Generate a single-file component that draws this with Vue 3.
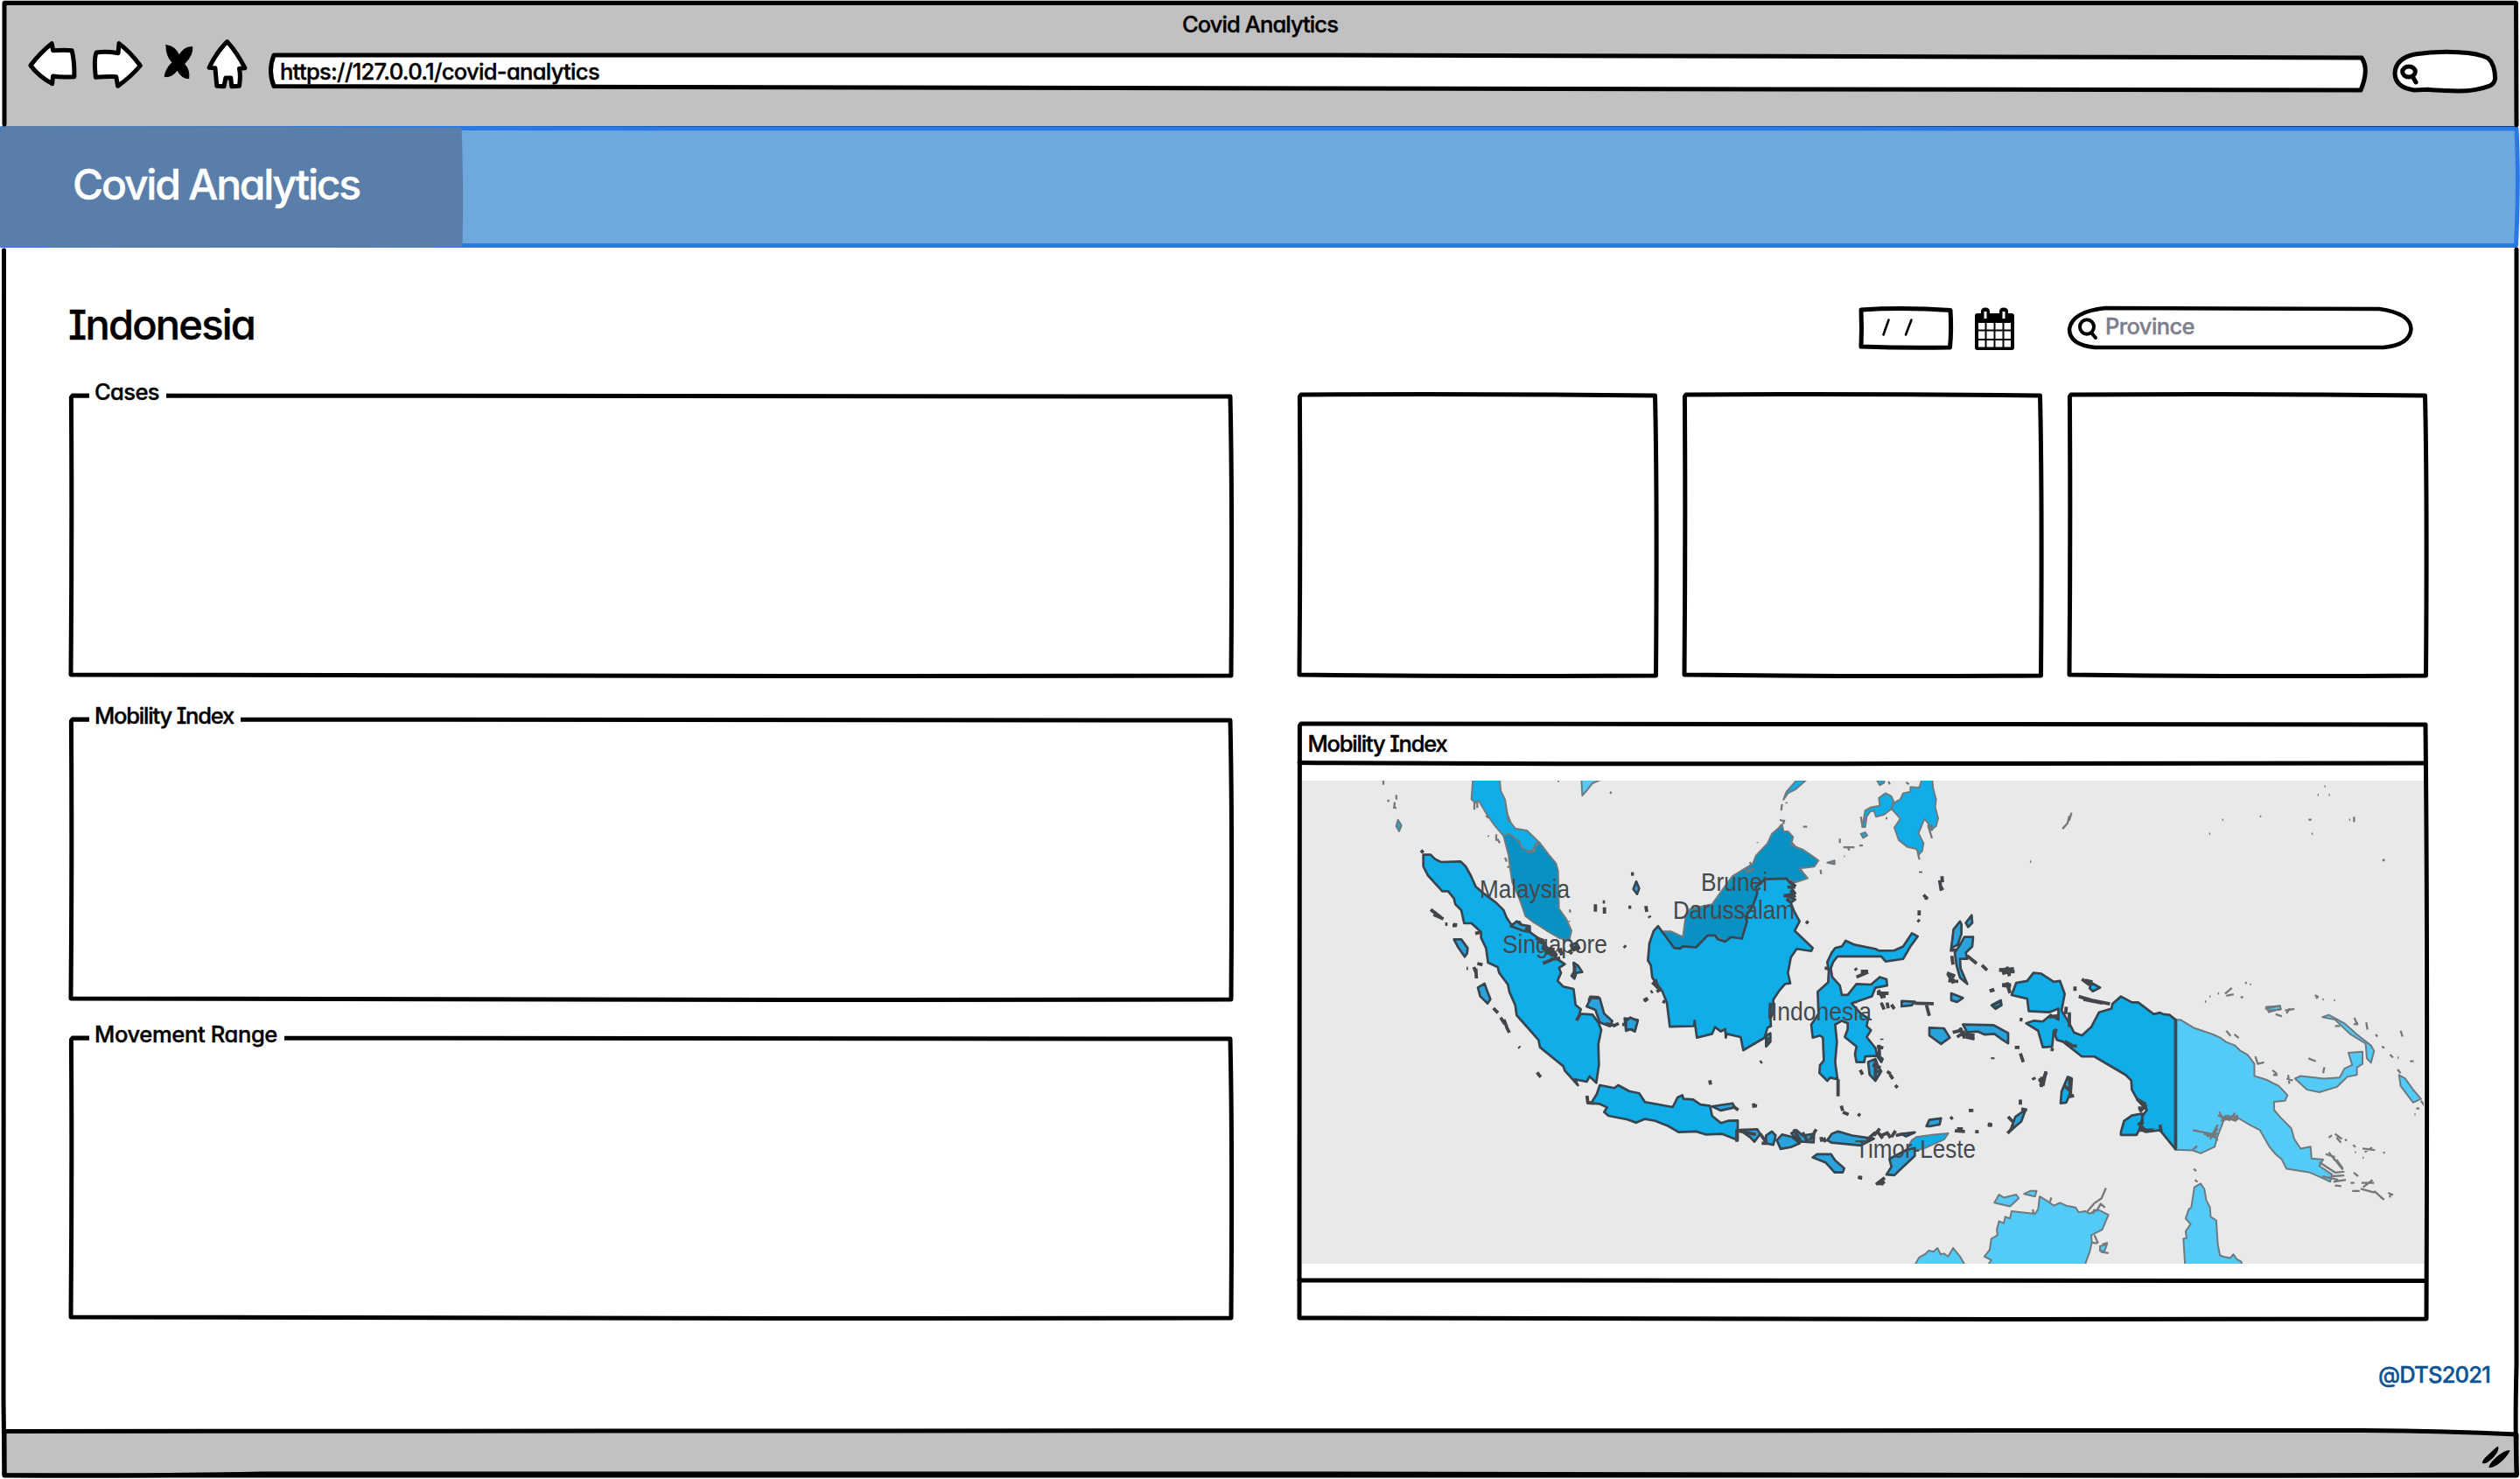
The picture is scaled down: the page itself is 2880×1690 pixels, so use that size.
<script setup>
// Stretches or tightens letter spacing so that a label takes a fixed width.
const vFit = {
  mounted(el, { value }) {
    const n = el.textContent.length
    const w = el.getBoundingClientRect().width
    el.style.letterSpacing = `${(value - w) / n}px`
  },
}

// Slightly uneven rectangle, as drawn by hand.
const sketch = (w, h) =>
  `M2,0 Q${w / 2},-1.2 ${w - 1},1 Q${w + 1.6},${h * 0.36} ${w},${h} ` +
  `Q${w * 0.5},${h + 1.6} 0,${h - 1} Q1.4,${h * 0.5} 0.4,2 Z`

const charts = [
  { name: 'Cases', width: 74, cls: 'cases' },
  { name: 'Mobility Index', width: 159, cls: 'mobility' },
  { name: 'Movement Range', width: 209, cls: 'movement' },
]

const west = {
  thailand: 'M640,270 L635,340 648,352 660,345 690,395 715,430 745,465 780,470 800,500 815,520 845,515 858,490 868,488 825,447 785,440 770,420 758,390 750,340 735,310 732,270Z',
  malaysia: 'M745,465 L765,458 785,475 800,485 805,505 820,512 830,522 850,520 855,500 868,488 900,530 925,560 932,585 935,715 960,750 978,790 970,825 935,815 900,795 870,775 845,760 820,740 808,705 795,670 775,625 768,580 762,530Z',
  sumatra: 'M470,530 L495,530 510,545 530,555 598,553 615,570 632,600 650,640 680,665 720,695 745,720 755,745 772,770 800,760 815,785 835,795 870,820 905,860 925,885 955,905 935,918 942,935 930,962 950,982 985,990 992,1045 1010,1060 1005,1075 1050,1078 1070,1105 1080,1130 1070,1180 1072,1250 1063,1312 1040,1290 1030,1308 990,1300 1000,1320 955,1270 950,1255 870,1190 865,1165 790,1080 785,1045 765,1000 760,975 730,935 725,915 692,900 685,850 668,815 668,795 635,765 610,765 600,720 580,700 575,680 555,655 535,655 485,600 470,570Z',
  isles: 'M575,820 L600,820 622,850 620,868 612,880 588,845Z M657,985 L680,972 690,1000 700,1025 690,1040 665,1015Z M1030,1050 L1045,1020 1075,1022 1090,1075 1118,1100 1110,1118 1075,1105 1060,1062Z M1165,1100 L1180,1088 1205,1100 1195,1135 1182,1128 1165,1130Z M1200,622 L1210,645 1203,665 1190,648Z M985,900 L1000,910 1015,932 995,935 988,955 978,945 988,930Z M770,775 L790,758 805,770 835,775 835,795 810,790Z M975,840 L995,832 1005,850 985,858Z',
  specks: 'M462,515 l8,8 M495,718 l20,14 M505,735 l34,15 M500,722 l30,22 M545,768 l8,0 M572,769 l14,2 M570,773 l14,0 M648,800 l16,-4 M655,903 l18,4 M643,915 l8,20 M650,920 l2,34 M710,1056 l16,16 M735,1088 l14,22 M746,1095 l10,26 M755,1120 l10,20 M860,1276 l6,8 M865,1284 l8,8 M855,815 l30,10 M860,825 l32,12 M875,850 l45,5 M880,838 l34,40 M890,865 l40,10 M905,850 l20,22 M880,902 l30,-12 M905,890 l34,-6 M940,850 l4,25 M980,845 l25,10 M968,858 l12,12 M990,912 l-4,40 M1038,1032 l5,-14 30,2 M995,1098 l12,-20 M1095,1110 l30,5 M1120,1118 l20,-10 M1152,1112 l8,0 M1225,1030 l14,-8 M1250,1002 l6,-4 M1060,700 l0,25 M1085,692 l8,0 M1091,710 l0,22 M1183,596 l8,0 M1173,710 l10,0 M1233,706 l3,20 M1244,740 l3,6 M1158,842 l6,6 M797,1188 l4,4 M1031,1356 l3,24 20,2 M618,920 l5,0 M820,780 l16,12',
  greySpecks: 'M333,276 l0,14 M348,342 l4,6 M377,325 l1,16 M372,350 l-2,22 M366,368 l12,2 M692,464 l2,4 M720,460 l0,22 M724,476 l8,14 M645,350 l0,26 M655,350 l0,20 M685,396 l8,8 M750,540 l6,14 M758,570 l6,4 M755,378 l8,40 M972,718 l2,10 M970,756 l1,4 M930,277 l6,0 M1110,320 l5,-6',
}

const centre = {
  kalimantan: 'M105,555 L118,572 160,625 180,627 190,620 235,623 275,585 300,585 310,597 335,605 355,590 392,595 400,570 410,540 405,525 430,490 445,450 440,430 455,420 470,405 545,403 555,415 575,425 560,430 575,450 545,455 560,465 575,470 560,480 570,505 590,540 573,570 635,625 630,635 580,628 560,655 550,705 558,738 540,740 520,762 500,790 500,830 490,850 492,875 480,880 470,912 397,952 388,910 340,900 337,912 335,885 320,892 300,878 290,900 238,912 230,858 228,875 145,877 135,800 120,765 85,720 80,680 70,665 75,610 90,570Z',
  borneo: 'M118,572 L150,572 190,590 200,520 215,500 290,485 340,420 360,395 430,355 440,330 480,290 495,260 520,240 530,230 535,252 550,252 568,270 560,295 600,310 625,325 655,345 640,365 590,370 618,402 575,415 545,403 470,405 455,420 445,450 410,540 392,595 355,590 335,605 300,585 275,585 235,623 180,627 160,625Z',
  philippines: 'M905,180 L915,160 935,150 945,130 970,125 970,110 1000,112 1010,85 1045,85 1048,115 1058,150 1055,175 1065,210 1058,235 1040,248 1030,225 1018,212 1008,235 998,258 1015,290 1010,315 1000,325 990,308 960,302 930,280 915,240 935,212 925,200Z M805,238 L815,185 835,175 865,170 862,145 885,130 905,140 912,155 905,180 880,198 852,205 845,185 830,190 820,205 815,238Z M800,260 L815,255 822,265 808,273Z M535,150 L545,125 580,88 612,88 575,118 550,130Z M855,88 L865,104 880,96 880,88Z M685,352 L710,345 710,357Z',
  java: 'M-125,1122 L-105,1092 -95,1064 -45,1073 -32,1064 5,1083 40,1090 60,1118 155,1134 172,1103 188,1096 192,1108 225,1110 250,1126 283,1130 290,1162 320,1185 345,1178 378,1177 378,1240 325,1220 270,1222 235,1212 175,1214 140,1195 95,1178 60,1172 30,1184 0,1174 -65,1162 -80,1150 -70,1135 -95,1124Z',
  sulawesi: 'M685,670 L700,640 712,625 735,620 748,602 780,615 850,628 862,634 915,633 945,620 975,578 995,588 970,620 945,660 885,668 870,652 720,652 705,670 697,690 702,718 728,745 735,775 755,775 785,740 835,742 865,718 888,725 890,745 850,752 838,780 790,795 768,802 800,835 825,850 820,875 835,888 820,910 850,945 855,965 875,980 870,990 855,970 815,972 812,990 785,990 780,965 785,940 745,910 755,885 755,866 735,858 712,870 718,925 712,990 720,1045 695,1040 685,1050 658,1025 660,1000 673,985 670,912 660,905 635,912 630,870 645,850 655,835 652,765 688,735 690,700Z',
  isles: 'M1110,625 L1118,565 1140,540 1145,550 1145,580 1132,615Z M1122,640 L1140,615 1155,590 1185,590 1182,620 1160,640 1165,660 1140,660 1142,690 1165,740 1140,720 1128,680Z M1160,545 L1180,520 1182,545 1168,558Z M1035,880 L1085,882 1105,912 1075,932 1035,905Z M1150,870 L1255,872 1305,897 1305,930 1280,915 1258,900 1225,902 1200,892 1165,895Z M1248,808 L1280,792 1282,808 1262,820Z M1110,770 L1150,785 1130,798 1110,792Z M940,795 L985,797 975,808 940,812Z M825,990 L850,980 860,1005 870,1020 850,1050 830,1030Z M290,1132 L360,1122 368,1135 320,1145Z M385,1207 L445,1205 455,1220 435,1245 420,1230Z M475,1225 L495,1212 508,1225 500,1255 475,1250Z M512,1240 L530,1222 565,1230 590,1250 560,1262 525,1268Z M562,1218 L580,1208 600,1225 640,1220 638,1247 605,1245 590,1245Z M685,1240 L700,1220 722,1212 770,1225 845,1235 800,1257 700,1248Z M635,1295 L650,1285 698,1285 712,1305 743,1330 738,1343 710,1343 680,1312Z M898,1300 L955,1272 985,1265 985,1290 945,1325 915,1352 888,1350 905,1325Z M1025,1195 L1035,1175 1075,1170 1070,1190 1040,1195Z M1312,1210 L1330,1165 1365,1142 1350,1180Z M475,905 L490,898 490,925 475,940Z M-10,850 L35,855 25,892 10,885 -5,890Z M940,1220 L985,1215 955,1228Z',
  timor: 'M955,1272 L975,1240 990,1230 1050,1222 1100,1218 1085,1238 1020,1265 985,1275Z',
  specks: 'M555,412 l15,10 M548,430 l28,0 M535,457 l35,5 M545,468 l14,10 M560,440 l14,24 M95,725 l10,30 M85,735 l28,25 M100,765 l18,-10 M58,795 l12,-8 M120,795 l10,4 M480,910 l-2,28 M490,800 l-2,50 M612,540 l8,6 M282,1048 l3,14 M430,1128 l14,2 M432,1122 l2,14 M455,992 l6,-4 M722,1045 l0,55 M733,1130 l5,16 M738,1150 l20,8 M790,1156 l8,6 M676,690 l12,0 M785,718 l40,-16 M800,700 l25,0 M780,690 l6,6 M855,770 l40,0 M860,760 l15,26 M870,780 l15,0 M870,800 l10,22 M890,800 l4,18 M905,806 l10,14 M985,802 l65,1 M1025,808 l10,34 M1095,705 l28,10 M1100,730 l34,2 M1098,708 l20,30 M1110,720 l14,15 M1105,632 l20,0 M1112,650 l4,28 M1165,650 l32,25 M1215,680 l18,16 M1275,695 l50,-4 M1285,702 l40,-2 M1300,685 l10,30 M1285,745 l30,2 M1300,735 l10,28 M1242,763 l16,-4 M1345,854 l8,0 M1115,895 l35,-8 M1130,910 l28,-18 M1140,880 l16,34 M1160,910 l30,6 M1150,900 l40,5 M1328,943 l16,0 M1347,962 l10,28 M1252,975 l0,6 M1391,1040 l2,6 M1412,1045 l14,20 M1418,1062 l18,-40 M798,1015 l8,15 M855,940 l22,5 M862,935 l2,34 M840,1000 l28,8 M845,1020 l25,0 M850,985 l0,60 M890,1020 l12,8 M900,1030 l10,14 M918,1064 l8,8 M872,915 l0,4 M455,1220 l20,26 M460,1250 l20,0 M570,1205 l25,40 M600,1215 l20,32 M625,1240 l22,-35 M663,1230 l4,15 M672,1232 l8,14 M820,1240 l30,-25 M845,1225 l20,-22 M855,1210 l20,24 M870,1225 l25,-10 M890,1215 l12,18 M905,1230 l14,-20 M920,1225 l25,-5 M790,1358 l14,4 M800,1354 l-2,12 M852,1382 l30,-22 M860,1378 l18,2 M872,1368 l8,12 M1107,1172 l8,-6 M1170,1145 l16,0 M1122,1210 l35,2 M1130,1204 l20,0 M1192,1213 l12,0 M1235,1190 l16,2 M1242,1184 l0,14 M1347,1110 l0,16 M1305,1165 l16,16 M1350,1140 l20,4 M1303,1218 l25,-24 M1005,380 l0,4 M1078,395 l2,20 M1070,408 l6,34 M1075,430 l6,10 M1015,455 l14,14 M1018,465 l12,0 M1000,505 l0,16 M995,535 l6,6 M12,388 l10,0 M360,1130 l20,14 M375,1205 l0,40 M380,1210 l60,12',
  greySpecks: 'M530,165 l-3,20 M545,158 l0,5 M522,215 l18,6 M528,230 l-8,10 M538,215 l-4,14 M602,237 l14,0 M728,275 l0,14 M740,303 l38,0 M755,303 l6,10 M795,297 l12,0 M742,332 l3,0 M662,375 l2,14 M690,352 l16,0 M995,318 l6,24 M1030,232 l14,42 M1045,250 l-4,-20 M955,95 l10,6 M895,92 l4,10 M446,286 l0,3 M420,350 l4,10 M400,372 l25,8 M405,385 l30,-14 M1380,349 l3,0 M600,378 l-10,0 M560,285 l20,20 M800,205 l6,32 M885,210 l6,0',
}

const east = {
  papua: 'M165,658 L180,625 215,620 235,598 260,600 300,622 320,620 335,655 325,700 350,735 365,760 390,768 420,745 445,705 485,695 488,682 515,662 550,678 570,678 620,710 640,706 650,710 670,712 690,725 690,1077 640,1025 595,1030 575,1022 585,985 598,970 570,945 550,915 548,890 530,875 430,825 390,825 330,785 310,780 300,755 295,798 265,800 250,755 212,735 235,728 265,730 290,712 315,725 315,695 285,705 220,702 215,668Z M515,1030 L525,1000 550,985 582,980 585,1005 565,1038 515,1038Z M415,640 L420,625 448,638 425,648Z M325,920 L345,880 358,885 355,920 340,950 322,952Z M108,685 L130,675 132,686 110,692Z',
  png: 'M690,725 L705,725 750,748 810,765 835,775 850,785 880,795 895,808 920,820 942,845 942,878 980,888 1020,905 1048,930 1040,945 1005,948 1005,970 1025,990 1060,1020 1070,1050 1090,1075 1122,1070 1125,1102 1162,1105 1150,1122 1190,1145 1185,1165 1160,1155 1120,1140 1045,1130 1030,1105 1010,1090 990,1070 960,1025 930,1012 890,992 850,985 825,1040 815,1070 770,1088 745,1080 690,1078Z M1072,885 L1090,878 1165,885 1215,882 1230,858 1255,848 1243,815 1288,812 1288,845 1270,855 1270,875 1240,880 1205,908 1150,922 1110,915Z M1160,718 L1180,712 1230,735 1270,765 1315,795 1325,810 1315,842 1302,830 1298,790 1250,765 1200,725Z M1405,875 L1425,885 1450,915 1475,940 1450,950 1410,905Z M980,690 L1025,688 1025,698 985,700Z',
  australia: 'M78,1368 L95,1350 100,1320 120,1310 118,1295 125,1272 140,1278 145,1260 160,1265 165,1245 240,1252 250,1240 255,1205 275,1215 300,1230 320,1222 340,1230 370,1235 380,1248 400,1245 415,1252 440,1240 475,1255 455,1295 420,1310 422,1330 415,1355 400,1390 90,1390 100,1378Z M110,1222 L125,1200 140,1208 180,1200 188,1210 160,1232Z M205,1198 L225,1190 245,1190 240,1205Z M720,1390 L715,1320 725,1318 722,1300 738,1280 722,1265 732,1240 740,1235 750,1180 770,1170 782,1185 788,1215 800,1235 802,1260 820,1270 825,1335 832,1365 850,1370 865,1372 875,1362 885,1375 900,1382 902,1390Z M-144,1390 L-130,1370 -112,1362 -100,1352 -85,1355 -72,1345 -62,1362 -52,1360 -38,1368 -22,1345 0,1368 15,1390Z M448,1340 L470,1335 462,1355 448,1352Z',
  specks: 'M125,590 l50,5 M135,600 l34,-8 M145,585 l16,16 M135,630 l28,0 M150,625 l10,28 M95,647 l14,-4 M192,724 l8,2 M390,615 l25,16 M400,618 l24,5 M380,662 l40,10 60,10 M395,670 l60,10 M368,635 l0,12 M340,690 l-2,20 M350,705 l0,40 M365,798 l-30,-14 M350,795 l24,2 M235,882 l4,6 M252,890 l18,-6 M255,905 l14,-6 M262,880 l-2,28 M275,865 l-10,40 M350,880 l4,50 M335,905 l20,15 M345,935 l20,-4 M565,940 l30,15 M570,965 l28,0 M575,975 l22,-20 M570,1025 l50,0 M640,1010 l4,20 M300,770 l8,-20 M285,718 l30,-4 M290,805 l10,2 M570,1005 l20,18 M105,828 l0,3 M690,725 L690,1077',
  greySpecks: 'M357,163 l-8,22 M350,172 l-6,20 -16,15 M224,296 l4,0 M797,220 l4,0 M839,182 l4,0 M960,173 l4,0 M1115,182 l10,0 M1166,92 l4,0 M1144,115 l4,0 M1180,115 l4,0 M1125,220 l4,0 M1245,182 l4,0 M1261,174 l0,14 M1352,294 l7,-4 M784,676 l4,0 M798,662 l4,0 M825,654 l4,0 M848,655 l22,-16 M852,660 l24,-4 M898,665 l8,-2 M912,625 l6,0 M928,628 l3,2 M976,695 l50,-8 M985,705 l45,-10 M1010,710 l20,6 M1040,700 l30,-4 M1045,708 l10,-14 M1136,658 l10,8 M1140,668 l6,-8 M1160,670 l4,0 M1196,672 l4,0 M1200,742 l16,0 M1262,720 l10,20 M1260,738 l14,-4 M1300,732 l4,20 M1330,765 l6,6 M1350,798 l8,4 M1376,820 l10,8 M1400,828 l4,0 M1440,838 l12,0 M1410,755 l6,16 M1115,830 l24,8 M1162,870 l4,-16 M945,825 l8,20 20,-4 M1000,862 l14,10 M1002,875 l14,0 M1045,885 l20,5 M1050,875 l4,24 M852,755 l14,14 M878,765 l14,10 M745,1025 l70,12 M780,1035 l40,10 M800,1050 l25,-30 M805,1040 l20,-30 M790,1042 l35,-8 M810,1030 l14,24 M825,985 l60,15 M835,1000 l55,-15 M840,990 l50,0 M845,996 l45,0 M860,1000 l20,-22 M830,975 l10,20 M745,1078 l14,-10 M1180,1045 l10,-6 M1200,1035 l22,14 M1205,1045 l14,14 M1232,1050 l6,4 M1258,1065 l8,6 M1288,1075 l40,4 M1295,1084 l24,-12 M1263,1085 l4,0 M1288,1100 l4,0 M1354,1086 l6,0 M1170,1090 l30,8 M1180,1085 l20,22 M1195,1100 l30,32 M1205,1105 l20,24 M1150,1112 l50,28 30,-2 M1160,1150 l50,10 M1195,1165 l40,-5 M1200,1175 l20,2 M1190,1150 l40,-2 M1260,1140 l14,10 M1250,1168 l12,0 M1255,1190 l24,0 M1285,1168 l40,0 M1290,1180 l30,-20 M1282,1184 l44,10 M1325,1190 l32,24 M1332,1195 l20,16 M1370,1195 l16,6 M1375,1208 l4,-12 M1400,860 l10,10 M1475,945 l12,14 M1460,966 l10,0 M1454,982 l4,0 M748,1130 l8,6 M752,1160 l8,6 M467,1182 l-14,28 -24,14 -22,22 M440,1240 l10,-15 14,10 M425,1252 l4,-10 12,2 M430,1310 l12,22 M420,1330 l20,2 M450,1355 l25,4 M455,1335 l18,-4 M292,1208 l-4,12 M235,1250 l-2,-10',
}
</script>

<template>
  <div class="window">
    <header class="chrome">
      <div class="chrome-title"><span v-fit="178">Covid Analytics</span></div>
      <nav class="toolbar">
        <svg class="ico back" viewBox="60 130 136 180" preserveAspectRatio="none">
          <path d="M75,225 Q100,180 128,150 L131,174 Q160,171 178,174 Q185,215 184,264 Q150,267 131,262 L129,288 Q95,262 75,225Z" />
        </svg>
        <svg class="ico fwd" viewBox="222 130 140 180" preserveAspectRatio="none">
          <path d="M349,226 Q325,180 296,150 L294,183 Q262,176 240,181 Q233,200 238,266 Q265,263 289,264 L293,296 Q325,265 349,226Z" />
        </svg>
        <svg class="ico stop" viewBox="400 130 90 180" preserveAspectRatio="none">
          <path class="solid" d="M413,156 Q435,158 445,190 Q458,160 478,162 Q480,190 458,220 Q472,240 469,270 Q450,270 441,241 Q428,266 409,264 Q411,238 428,215 Q412,192 413,156Z" />
        </svg>
        <svg class="ico home" viewBox="510 130 112 180" preserveAspectRatio="none">
          <path d="M566,144 Q590,180 610,234 L596,236 Q600,262 596,296 L577,297 L575,268 L562,268 L558,297 L540,296 Q538,262 536,234 L521,233 Q540,178 566,144Z" />
        </svg>
        <div class="url">
          <svg class="frame" viewBox="0 0 2394 42">
            <path d="M3,0 L1200,0 2389,3 Q2398,16 2388,40 L1200,38 3,35.5 Q-4,18 3,0Z" />
          </svg>
          <span v-fit="365">https://127.0.0.1/covid-analytics</span>
        </div>
        <svg class="browser-search" viewBox="400 165 370 165">
          <path d="M412,250 Q415,200 480,186 Q550,175 630,179 Q700,182 732,200 Q755,220 756,270 Q752,290 735,295 Q690,312 630,312 Q560,311 525,307 L478,309 Q412,300 412,250Z" />
          <ellipse cx="460" cy="246" rx="22" ry="18" />
          <path d="M472,262 L484,282" />
        </svg>
      </nav>
    </header>

    <div class="banner">
      <svg class="frame" viewBox="0 0 2880 137">
        <path class="bar" d="M2,0.500 L2876,1 Q2879,60 2875.5,134.500 L2,134.500Z" />
        <path class="brand-bg" d="M1,-2 L300,-1.500 527.500,0 Q530,60 528.500,136 Q260,138 0,136 L0,4Z" />
      </svg>
      <span class="brand" v-fit="328">Covid Analytics</span>
    </div>

    <main class="page">
      <section class="page-head">
        <h1><span v-fit="213">Indonesia</span></h1>
        <div class="date">
          <svg class="frame" viewBox="0 0 104 45">
            <path d="M1,1 Q50,-2 103,1.500 Q104.500,24 102.500,44 Q50,45 1,43 Q2,22 1,1Z" />
            <path class="slash" d="M26.500,29.500 L32.500,12.500 M52,29.500 L58.500,12.500" />
          </svg>
        </div>
        <svg class="calendar" viewBox="0 0 45 49">
          <path d="M3,7 H42 Q45,7 45,10 V46 Q45,49 42,49 H3 Q0,49 0,46 V10 Q0,7 3,7Z" />
          <path d="M7,14 V5 Q7,0.500 12,0.500 Q17,0.500 17,5 V14Z M28,14 V5 Q28,0.500 33,0.500 Q38,0.500 38,5 V14Z" />
          <path class="gap" d="M10.500,5 h3 v8 h-3Z M31.500,5 h3 v8 h-3Z M4,18 h7.500 v7.500 h-7.500Z M13.500,18 h8 v7.500 h-8Z M23.500,18 h8 v7.500 h-8Z M33.500,18 h7.500 v7.500 h-7.500Z M4,27.500 h7.500 v8.500 h-7.500Z M13.500,27.500 h8 v8.500 h-8Z M23.500,27.500 h8 v8.500 h-8Z M33.500,27.500 h7.500 v8.500 h-7.500Z M4,38 h7.500 v7.500 h-7.500Z M13.500,38 h8 v7.500 h-8Z M23.500,38 h8 v7.500 h-8Z M33.500,38 h7.500 v7.500 h-7.500Z" />
        </svg>
        <div class="province">
          <svg class="frame" viewBox="0 0 393 45">
            <path d="M42,0 L355,1 Q391,6 391.500,24 Q390,42 360,45 L30,45 Q1,42 1,24 Q4,4 42,0Z" />
            <ellipse class="lens" cx="21" cy="21.500" rx="8" ry="8.200" />
            <path class="lens" d="M26,28 L31,34" />
          </svg>
          <span v-fit="102">Province</span>
        </div>
      </section>

      <section class="dashboard">
        <div class="left">
          <div v-for="c in charts" :key="c.name" class="panel" :class="c.cls">
            <svg class="frame" viewBox="0 0 1326 320"><path :d="sketch(1326, 320)" /></svg>
            <div class="legend"><span v-fit="c.width">{{ c.name }}</span></div>
          </div>
        </div>

        <div class="right">
          <div class="tiles">
            <div v-for="n in 3" :key="n" class="tile">
              <svg class="frame" viewBox="0 0 407.500 321"><path :d="sketch(407.5, 321)" /></svg>
            </div>
          </div>

          <div class="map-card">
            <svg class="frame" viewBox="0 0 1288 680">
              <path :d="sketch(1288, 680)" />
              <path d="M0,44.500 Q300,46.500 700,45.500 T1287,45 M0,636 Q500,634.500 1287,636.500" />
            </svg>
            <div class="map-title"><span v-fit="159">Mobility Index</span></div>
            <svg class="map" viewBox="1488 892 1282.500 552" width="1282.500" height="552">
              <g transform="translate(1860 860) scale(0.33333 0.35714)">
                <path class="land grey" :d="centre.philippines" />
                <path class="land grey strong" :d="centre.borneo" />
                <path class="land dark" :d="centre.kalimantan" />
                <path class="land dark" :d="centre.java" />
                <path class="land dark" :d="centre.sulawesi" />
                <path class="land grey" :d="centre.timor" />
                <path class="land dark isles" :d="centre.isles" />
                <path class="speck dark" :d="centre.specks" />
                <path class="speck grey" :d="centre.greySpecks" />
              </g>
              <g transform="translate(1470 800) scale(0.33333)">
                <path class="land grey" :d="west.thailand" />
                <path class="land grey strong" :d="west.malaysia" />
                <path class="land dark" :d="west.sumatra" />
                <path class="land dark isles" :d="west.isles" />
                <path class="land grey light" d="M1012,270 L1015,327 1030,310 1050,285 1085,270Z" />
                <path class="land grey isles" d="M383,410 L395,430 387,450 377,432Z" />
                <path class="speck dark" :d="west.specks" />
                <path class="speck grey" :d="west.greySpecks" />
              </g>
              <g transform="translate(2240 860) scale(0.35714 0.42088)">
                <path class="land grey light" :d="east.australia" />
                <path class="land grey light" :d="east.png" />
                <path class="land dark" :d="east.papua" />
                <path class="speck dark" :d="east.specks" />
                <path class="speck grey" :d="east.greySpecks" />
              </g>
              <g class="names">
                <text x="1691" y="1026" textLength="103" lengthAdjust="spacingAndGlyphs">Malaysia</text>
                <text x="1717" y="1088.500" textLength="120" lengthAdjust="spacingAndGlyphs">Singapore</text>
                <text x="1944" y="1017.500" textLength="76" lengthAdjust="spacingAndGlyphs">Brunei</text>
                <text x="1912" y="1049.500" textLength="139" lengthAdjust="spacingAndGlyphs">Darussalam</text>
                <text x="2024" y="1166" textLength="115" lengthAdjust="spacingAndGlyphs">Indonesia</text>
                <text x="2120" y="1322.500" textLength="138" lengthAdjust="spacingAndGlyphs">Timor-Leste</text>
              </g>
            </svg>
          </div>
        </div>
      </section>

      <div class="credit"><span v-fit="128">@DTS2021</span></div>
    </main>

    <footer class="statusbar">
      <svg class="frame" viewBox="0 0 2880 54">
        <path class="fill" d="M5,-0.500 Q300,0 700,-1 L2700,-1.500 Q2790,-1 2876,3 L2876,50 5,50Z" />
        <path class="grip" d="M2855,36.500 Q2851,39 2843,47 Q2836,53 2837,56 Q2841,58 2850,49 Q2857,41 2855,36.500Z M2868.500,41 Q2862,41 2853,49 Q2844,57 2844.500,61 Q2850,62 2860,53 Q2868,45 2868.500,41Z" transform="translate(0 -20)" />
      </svg>
    </footer>
    <svg class="frame outline" viewBox="0 0 2880 1690">
      <path d="M5,3.500 L2875.500,3.500 2876,143 M2876,285 L2876,1560 Q2874,1640 2876.500,1685 L2600,1686 1500,1684 300,1684 Q130,1687 5,1685.500 L4,1600 4.500,286 M5,142 L5,3.500" />
    </svg>
  </div>
</template>

<style>
body {
  margin: 0;
  background: #fff;
}
</style>

<style scoped>
.window {
  position: relative;
  display: flex;
  flex-direction: column;
  width: 2880px;
  height: 1690px;
  overflow: hidden;
  background: #fff;
  color: #000;
  font: 500 25.500px/30px Inter, 'Open Sans', sans-serif;
  font-feature-settings: 'cv11', 'cv08', 'calt' 0;
  -webkit-text-stroke: 0.400px currentColor;
}
span {
  display: inline-block;
  white-space: nowrap;
}
svg {
  display: block;
  flex: none;
  fill: none;
  stroke: #000;
  stroke-width: 5;
  stroke-linejoin: round;
  stroke-linecap: round;
}
.frame {
  position: absolute;
  inset: 0;
  width: 100%;
  height: 100%;
  overflow: visible;
}
.outline {
  pointer-events: none;
}

/* browser chrome */
.chrome {
  box-sizing: border-box;
  height: 146px;
  margin: 0 4px;
  background: #c1c1c1;
  border-bottom: 2px solid #000;
}
.chrome-title {
  display: flex;
  justify-content: center;
  box-sizing: border-box;
  height: 43px;
  padding-top: 13px;
}
.toolbar {
  display: flex;
  align-items: flex-start;
  padding-left: 23.500px;
}
.ico {
  height: 60px;
}
.ico path {
  fill: #fff;
  vector-effect: non-scaling-stroke;
}
.ico .solid {
  fill: #000;
  stroke-width: 1;
}
.back { width: 62.400px; }
.fwd { width: 64.300px; margin-left: 12px; }
.stop { width: 41.300px; margin-left: 17.400px; }
.home { width: 51.400px; margin-left: 9.200px; }
.url {
  position: relative;
  width: 2394px;
  height: 42px;
  margin: 20px 0 0 24.500px;
  line-height: 38px;
  padding-left: 10px;
  box-sizing: border-box;
}
.url .frame path {
  fill: #fff;
}
.url span {
  position: relative;
}
.browser-search {
  width: 123.300px;
  height: 55px;
  margin: 12px 0 0 29px;
  stroke-width: 15;
}
.browser-search path:first-child {
  fill: #fff;
}

/* banner */
.banner {
  position: relative;
  height: 137px;
  display: flex;
}
.bar {
  fill: #6fa8dc;
  stroke: #2a78e4;
}
.brand-bg {
  fill: #597eaa;
  stroke: none;
}
.brand {
  position: relative;
  margin-left: 83px;
  font-size: 48px;
  line-height: 130px;
  color: #fff;
}

/* page */
.page {
  display: flex;
  flex-direction: column;
  height: 1353px;
  padding-left: 81px;
}
.page-head {
  display: flex;
  align-items: flex-start;
  height: 168px;
}
h1 {
  width: 2046px;
  margin: 0 3px 0 -3px;
  font: inherit;
  font-size: 47px;
  line-height: 176px;
}
.date {
  position: relative;
  width: 104px;
  height: 45px;
  margin: 69.500px 0 0 -1px;
}
.slash {
  stroke-width: 2.600;
}
.calendar {
  width: 45px;
  height: 49px;
  margin: 68px 0 0 27px;
  fill: #000;
  stroke: none;
}
.calendar .gap {
  fill: #fff;
}
.province {
  position: relative;
  width: 393px;
  height: 45px;
  margin: 69px 0 0 61.500px;
  padding-left: 42.500px;
  box-sizing: border-box;
  line-height: 42px;
  color: #7e7e8c;
}
.province .frame {
  stroke-width: 4.500;
}
.province .lens {
  stroke-width: 4;
}
.dashboard {
  display: flex;
  gap: 77.500px;
  height: 1056px;
}
.left {
  width: 1326px;
  padding-top: 1px;
}
.panel {
  position: relative;
  height: 320px;
}
.mobility {
  margin-top: 50px;
}
.movement {
  margin-top: 44px;
}
.legend {
  position: relative;
  top: -19px;
  display: inline-block;
  margin-left: 21px;
  padding: 0 7.500px 0 6px;
  background: #fff;
}
.right {
  width: 1288px;
}
.tiles {
  display: flex;
  gap: 32.500px;
}
.tile {
  position: relative;
  width: 407.500px;
  height: 321px;
}
.map-card {
  position: relative;
  height: 680px;
  margin-top: 55px;
}
.map-title {
  box-sizing: border-box;
  height: 65px;
  padding: 8px 0 0 10px;
}
.map {
  margin-left: 3px;
  overflow: hidden;
  background: #e9e9e9;
}
.map path {
  vector-effect: non-scaling-stroke;
}
.land {
  fill: #10ade8;
}
.land.dark {
  stroke: #36454f;
  stroke-width: 2.700;
}
.land.isles {
  fill: #2aa3dc;
}
.land.grey {
  stroke: #6c7a82;
  stroke-width: 2;
}
.land.strong {
  fill: #0891c3;
}
.land.light {
  fill: #54cbf6;
}
.speck {
  stroke-linecap: butt;
}
.speck.dark {
  stroke: #42464a;
  stroke-width: 3.800;
}
.speck.grey {
  stroke: #74787b;
  stroke-width: 2.300;
}
.names {
  fill: #44484c;
  stroke: none;
  -webkit-text-stroke: 0;
  font: 400 30px 'Liberation Sans', Arial, sans-serif;
}
.credit {
  margin: 49px 34px 0 0;
  align-self: flex-end;
  color: #0b5394;
}

/* status bar */
.statusbar {
  position: relative;
  height: 54px;
}
.statusbar .fill {
  fill: #c1c1c1;
}
.statusbar .grip {
  fill: #000;
  stroke: none;
}
</style>
